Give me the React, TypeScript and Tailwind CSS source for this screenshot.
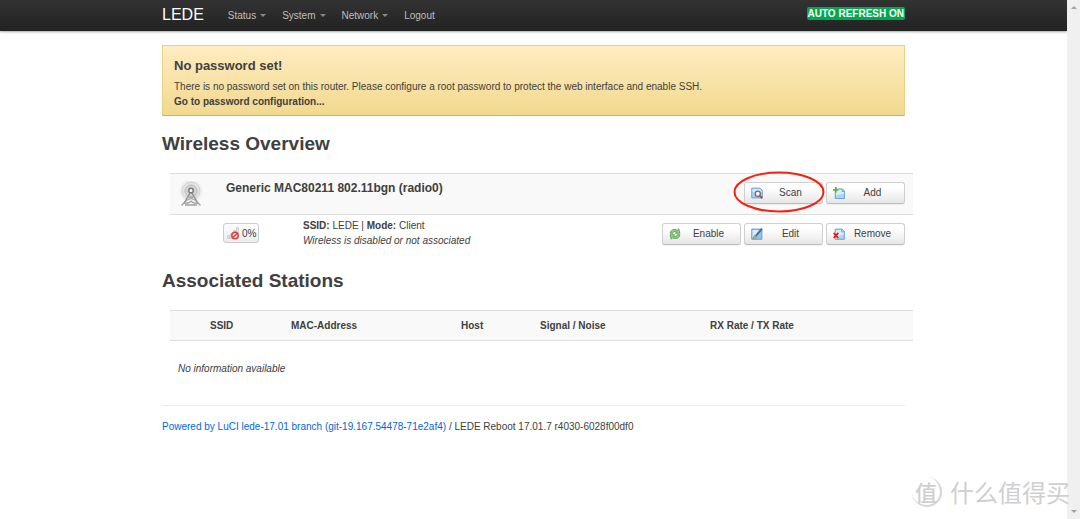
import type { ReactNode } from "react";

interface NavItem {
  label: string;
  hasMenu: boolean;
}

const navItems: NavItem[] = [
  { label: "Status", hasMenu: true },
  { label: "System", hasMenu: true },
  { label: "Network", hasMenu: true },
  { label: "Logout", hasMenu: false },
];

function ScanIcon() {
  return (
    <svg className="size-3" viewBox="0 0 16 16" fill="none" aria-hidden="true">
      <path d="M1 1.5h11l3 3v10H1z" fill="#a9d0f3" stroke="#6a9fd2" strokeWidth="1.3" />
      <path d="M2 2.500h9.500l2.500 2.500v2H2z" fill="#d6eafb" />
      <path d="M11.500 11.500l3.500 3.500" stroke="#9a5a3a" strokeWidth="2.400" />
      <circle cx="9" cy="9" r="3.400" fill="#f1f6fa" stroke="#7c6a62" strokeWidth="1.700" />
    </svg>
  );
}

function AddIcon() {
  return (
    <svg className="size-3" viewBox="0 0 16 16" fill="none" aria-hidden="true">
      <path d="M3 2.500h9.500l3 3v10H3z" fill="#a9d5f7" stroke="#5b97cf" strokeWidth="1.200" />
      <path d="M4 3.500h8l2.500 3v2.500L4 11z" fill="#d8edfc" />
      <path d="M12 3v3h3" stroke="#5b97cf" />
      <path d="M3.800 0v7.600M0 3.800h7.600" stroke="#fff" strokeWidth="3.600" />
      <path d="M3.800 0v7.600M0 3.800h7.600" stroke="#58b63c" strokeWidth="2.400" />
    </svg>
  );
}

function EnableIcon() {
  return (
    <svg className="size-3" viewBox="0 0 16 16" aria-hidden="true">
      <path
        d="M1.500 7C2 2.500 7 .5 11 3l2-2 1.500 6H8.500l1.700-2C7.500 3.700 5.300 5 5 7z"
        fill="#8fd07c"
        stroke="#3f9a3c"
      />
      <path
        d="M14.500 9c-.5 4.500-5.500 6.500-9.500 4l-2 2-1.500-6h6l-1.700 2c2.700 1.300 4.900 0 5.200-2z"
        fill="#8fd07c"
        stroke="#3f9a3c"
      />
    </svg>
  );
}

function EditIcon() {
  return (
    <svg className="size-3" viewBox="0 0 16 16" fill="none" aria-hidden="true">
      <path d="M1 1.500h13.500v13.500H1z" fill="#93c4ef" stroke="#5a94cb" strokeWidth="1.200" />
      <path d="M2 2.500h11L2 13z" fill="#d9edfc" />
      <path d="M6.500 10.500L14.500 1" stroke="#466f96" strokeWidth="2.600" />
      <path d="M3 14l1.500-4.500 3 2.500z" fill="#edb34f" stroke="#8a6630" strokeWidth="0.600" />
    </svg>
  );
}

function RemoveIcon() {
  return (
    <svg className="size-3" viewBox="0 0 16 16" fill="none" aria-hidden="true">
      <path d="M3 1.500h9l3 3v10.500H3z" fill="#a9d5f7" stroke="#5b97cf" strokeWidth="1.200" />
      <path d="M4 2.500h7.500L14 5v4L4 11z" fill="#d8edfc" />
      <path d="M11.500 2v3h3" stroke="#5b97cf" />
      <path d="M1 6.500l6 7M7 6.500l-6 7" stroke="#fff" strokeWidth="4" />
      <path d="M1 6.500l6 7M7 6.500l-6 7" stroke="#e01820" strokeWidth="2.600" />
    </svg>
  );
}

function RadioTowerIcon() {
  return (
    <svg className="size-[26px]" viewBox="0 0 26 26" fill="none" aria-hidden="true">
      <circle cx="13" cy="10" r="11.500" fill="#f0f0f0" />
      <circle cx="13" cy="10" r="9" fill="#e4e4e4" stroke="#d2d2d2" />
      <circle cx="13" cy="10" r="6" fill="#d4d4d4" stroke="#bcbcbc" />
      <path d="M12 12L6 22.500M14 12l6 10.500" stroke="#8f8f8f" strokeWidth="1.500" />
      <path d="M10 15.500l8.500 4.500M16 15.500L7.500 20M9.500 16h7" stroke="#a6a6a6" />
      <path d="M3.500 24.500L6 22h4l3-1.500 3 1.500h4l2.500 2.500M7 24h12" stroke="#a0a0a0" strokeWidth="1.300" />
      <circle cx="13" cy="9.500" r="3" fill="#777" />
      <circle cx="13" cy="9.500" r="1.500" fill="#fff" />
    </svg>
  );
}

function SignalIcon() {
  return (
    <svg className="size-[14px]" viewBox="0 0 14 14" fill="none" aria-hidden="true">
      <path
        d="M1.500 9.500h2v3h-2zM4.500 7.500h2v5h-2zM7.500 4.500h2v8h-2zM10.500 1.500h2v11h-2z"
        fill="#e6e6e6"
        stroke="#d0d0d0"
      />
      <circle cx="9" cy="9.500" r="3.200" fill="#f6dcdc" stroke="#d9434a" strokeWidth="1.500" />
      <path d="M7 11.500l4-4" stroke="#d9434a" strokeWidth="1.400" />
    </svg>
  );
}

function ActionButton({ icon, label }: { icon: ReactNode; label: string }) {
  return (
    <button
      type="button"
      className="flex h-[22px] w-[79px] items-center rounded-[3px] border border-[#d0d0d0] border-b-[#bbb] bg-linear-to-b from-white from-25% to-[#e6e6e6] pr-1 pl-[6px] shadow-[0_1px_1px_rgba(0,0,0,0.05)]"
    >
      {icon}
      <span className="flex-1 text-center">{label}</span>
    </button>
  );
}

function Header() {
  return (
    <header className="h-[31px] bg-linear-to-b from-[#333] to-[#222] shadow-[0_1px_2px_rgba(0,0,0,0.35)]">
      <div className="mx-auto flex h-full max-w-[743px] items-center">
        <a href="#" className="mr-6 pb-[2px] text-base text-white">
          LEDE
        </a>
        <nav className="flex flex-1 gap-4 text-[#bfbfbf]">
          {navItems.map((item) => (
            <a key={item.label} href="#" className="flex items-center gap-1">
              {item.label}
              {item.hasMenu && (
                <span className="border-x-3 border-t-3 border-x-transparent border-t-[#888]" />
              )}
            </a>
          ))}
        </nav>
        <button
          type="button"
          className="mb-1 rounded-[2px] bg-[#00a84f] px-px leading-[13px] font-bold text-white uppercase"
        >
          Auto Refresh on
        </button>
      </div>
    </header>
  );
}

function WirelessTable() {
  return (
    <table className="ml-2 w-full table-fixed">
      <colgroup>
        <col className="w-12" />
        <col className="w-[77px]" />
        <col />
        <col className="w-[268px]" />
      </colgroup>
      <tbody>
        <tr className="border-y border-[#ddd] bg-[#f9f9f9]">
          <td className="h-[41px] pl-2">
            <RadioTowerIcon />
          </td>
          <td colSpan={2} className="pt-[5px] pl-2 align-top">
            <h3 className="text-xs leading-[18px] font-bold">
              Generic MAC80211 802.11bgn (radio0)
            </h3>
          </td>
          <td className="pr-2 pb-[3px]">
            <div className="flex justify-end gap-[3px]">
              <ActionButton icon={<ScanIcon />} label="Scan" />
              <ActionButton icon={<AddIcon />} label="Add" />
            </div>
          </td>
        </tr>
        <tr>
          <td />
          <td className="h-[38px] pl-[5px]">
            <span className="inline-flex h-5 items-center rounded-[3px] border border-[#ccc] bg-linear-to-b from-white to-[#ebebeb] px-[2px]">
              <SignalIcon />
              <span className="pl-[2px]">0%</span>
            </span>
          </td>
          <td className="pb-[2px] pl-2">
            <strong>SSID:</strong> LEDE | <strong>Mode:</strong> Client
            <br />
            <em>Wireless is disabled or not associated</em>
          </td>
          <td className="pr-2">
            <div className="flex justify-end gap-[3px]">
              <ActionButton icon={<EnableIcon />} label="Enable" />
              <ActionButton icon={<EditIcon />} label="Edit" />
              <ActionButton icon={<RemoveIcon />} label="Remove" />
            </div>
          </td>
        </tr>
      </tbody>
    </table>
  );
}

function StationsTable() {
  return (
    <table className="ml-2 w-full table-fixed text-left">
      <colgroup>
        <col className="w-8" />
        <col className="w-[81px]" />
        <col className="w-[170px]" />
        <col className="w-[79px]" />
        <col className="w-[170px]" />
        <col />
      </colgroup>
      <thead>
        <tr className="border-y border-[#ddd] bg-[#f9f9f9]">
          <td className="h-[30px]" />
          <th className="pl-2">SSID</th>
          <th className="pl-2">MAC-Address</th>
          <th className="pl-2">Host</th>
          <th className="pl-2">Signal / Noise</th>
          <th className="pl-2">RX Rate / TX Rate</th>
        </tr>
      </thead>
      <tbody>
        <tr>
          <td colSpan={6} className="h-[57px] pl-2">
            <em>No information available</em>
          </td>
        </tr>
      </tbody>
    </table>
  );
}

// Decorative gutter drawn in place of the native scrollbar
function ScrollGutter() {
  return (
    <div className="flex w-[13px] shrink-0 flex-col items-center justify-between bg-[#f0f0f0] py-[6px]">
      <span className="border-x-3 border-b-3 border-x-transparent border-b-[#a3a3a3]" />
      <span className="border-x-3 border-t-3 border-x-transparent border-t-[#a3a3a3]" />
    </div>
  );
}

function Watermark() {
  return (
    <div className="pointer-events-none absolute right-[10px] bottom-[9px] flex items-center gap-2 font-['Noto_Sans_CJK_SC',sans-serif] text-[#cfcfcf]">
      <span className="flex size-[30px] items-center justify-center rounded-full border-r-2 border-b-2 border-[#d4d4d4] text-[22px] leading-none font-medium">
        值
      </span>
      <span className="text-2xl leading-9">什么值得买</span>
    </div>
  );
}

export default function App() {
  return (
    <div className="relative flex min-h-screen bg-white font-['Liberation_Sans',Arial,sans-serif] text-[10px] leading-[15px] text-[#404040]">
      <div className="min-w-0 flex-1">
        <Header />
        <main className="mx-auto max-w-[743px] pt-[14px]">
          <section className="border border-[#e8d184] border-b-[#cdb566] bg-linear-to-b from-[#ffecc0] to-[#f1d98f] px-[11px] pt-[11px] pb-[6px]">
            <h4 className="mb-1 text-[13px] leading-[18px] font-bold">No password set!</h4>
            <p>
              There is no password set on this router. Please configure a root password to protect the
              web interface and enable SSH.
            </p>
            <a href="#" className="block font-bold">
              Go to password configuration...
            </a>
          </section>

          <h2 className="mt-[14px] mb-[15px] text-[19px] leading-7 font-bold">Wireless Overview</h2>
          <div className="relative">
            <WirelessTable />
            {/* Highlight around the Scan button */}
            <svg
              className="pointer-events-none absolute -top-[2px] right-[80px] h-[42px] w-[92px]"
              viewBox="0 0 92 42"
              fill="none"
              aria-hidden="true"
            >
              <ellipse cx="46" cy="21" rx="44.500" ry="19.500" stroke="#f7200f" strokeWidth="2" />
            </svg>
          </div>

          <h2 className="mt-[14px] mb-[15px] text-[19px] leading-7 font-bold">Associated Stations</h2>
          <StationsTable />

          <footer className="mt-2 border-t border-[#eee] pt-[13px]">
            <a href="#" className="text-[#0069d6]">
              Powered by LuCI lede-17.01 branch (git-19.167.54478-71e2af4)
            </a>{" "}
            / LEDE Reboot 17.01.7 r4030-6028f00df0
          </footer>
        </main>
      </div>
      <ScrollGutter />
      <Watermark />
    </div>
  );
}
